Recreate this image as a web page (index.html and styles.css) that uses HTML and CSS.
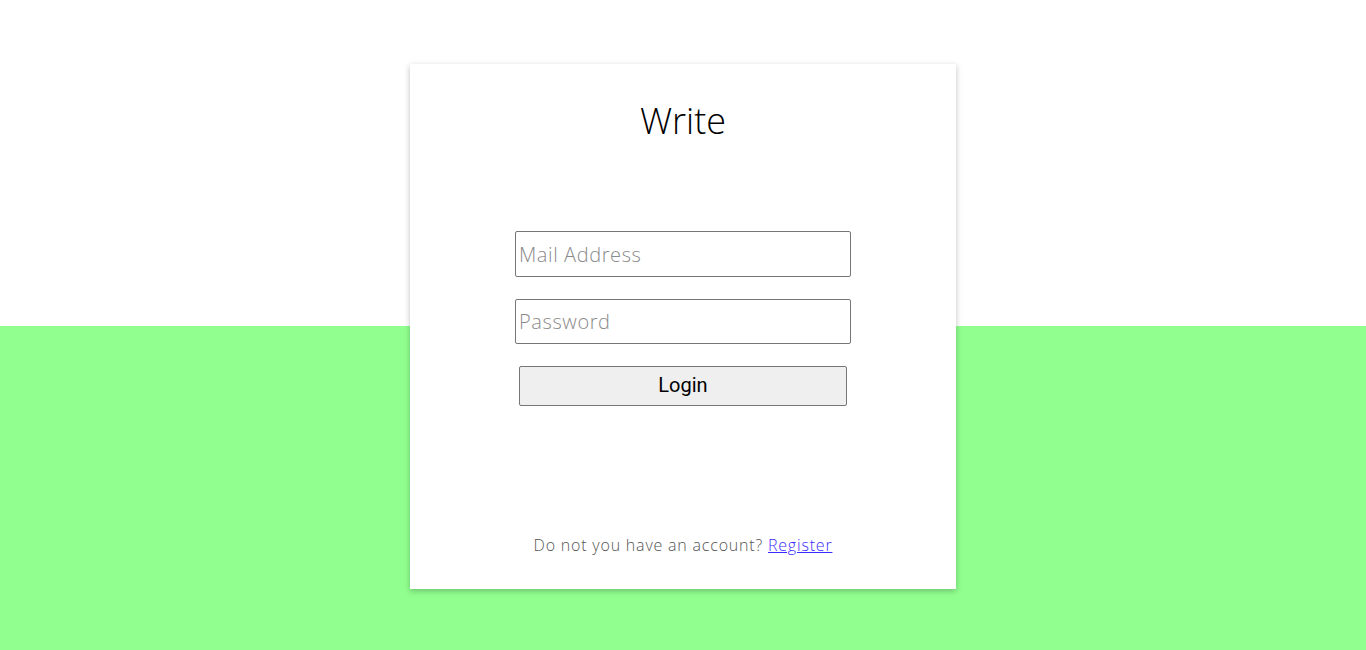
FILE: index.html
```html
<!DOCTYPE html>
<html>
<head>
<meta charset="utf-8">
<link rel="stylesheet" href="styles.css">
</head>
<body>
<div class="page">
  <div class="card">
    <h1 class="title">Write</h1>
    <form class="form">
      <input class="field" type="text" placeholder="Mail Address">
      <input class="field" type="password" placeholder="Password">
      <button class="btn" type="button">Login</button>
    </form>
    <p class="footer">Do not you have an account? <a href="#" class="link">Register</a></p>
  </div>
</div>
</body>
</html>
```
FILE: styles.css
```css
html, body {
  margin: 0;
  padding: 0;
}
body {
  width: 1366px;
  height: 650px;
  overflow: hidden;
  font-family: "Open Sans", "Liberation Sans", sans-serif;
  font-weight: 300;
  background: linear-gradient(to bottom, #ffffff 0, #ffffff 326px, #91ff8f 326px, #91ff8f 100%);
}
.page {
  display: flex;
  justify-content: center;
  padding-top: 64px;
}
.card {
  width: 546px;
  height: 525px;
  background: #ffffff;
  box-shadow: 0 2px 6px rgba(0, 0, 0, 0.25);
  display: flex;
  flex-direction: column;
  align-items: center;
  box-sizing: border-box;
  padding-top: 35px;
}
.title {
  margin: 0;
  font-size: 36px;
  font-weight: 300;
  line-height: 44px;
  color: #000;
  letter-spacing: 0;
}
.form {
  display: flex;
  flex-direction: column;
  align-items: center;
  margin-top: 88px;
}
.field {
  width: 336px;
  height: 46px;
  box-sizing: border-box;
  border: 1px solid #767676;
  border-radius: 2px;
  padding: 0 3px;
  font-family: "Open Sans", "Liberation Sans", sans-serif;
  font-weight: 300;
  font-size: 20px;
  letter-spacing: 0.6px;
  margin: 0 0 22px 0;
  color: #333;
}
.field + .field {
  height: 45px;
}
.field::placeholder {
  color: #8a8a8a;
}
.btn {
  width: 328px;
  height: 40px;
  box-sizing: border-box;
  border: 1px solid #767676;
  border-radius: 2px;
  background: #efefef;
  font-family: Roboto, "Liberation Sans", sans-serif;
  font-size: 20px;
  font-weight: 400;
  color: #000;
  padding: 0 0 2px 0;
}
.footer {
  margin: auto 0 33px 0;
  font-size: 16px;
  line-height: 22px;
  letter-spacing: 0.8px;
  color: #555;
}
.link {
  color: #3b2bff;
  text-decoration: underline;
}
```
